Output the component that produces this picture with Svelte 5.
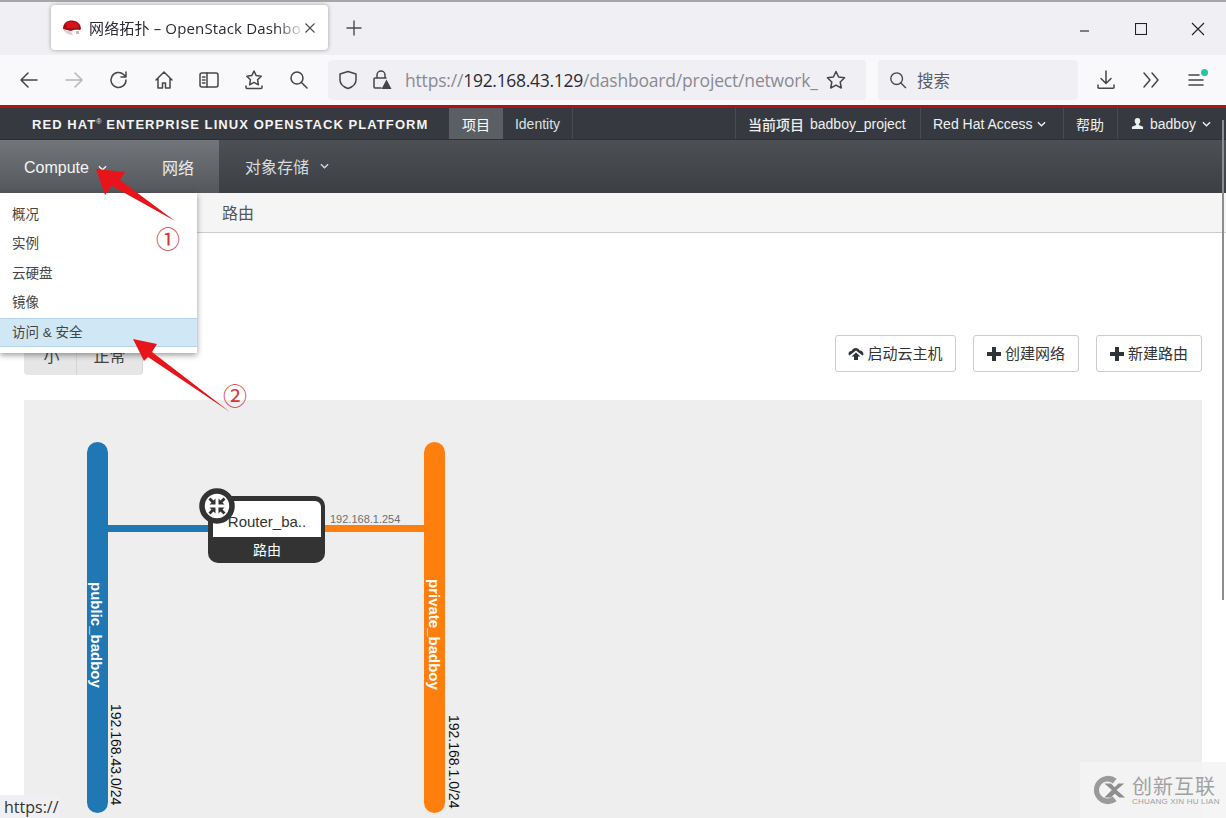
<script>
  const menu = ['概况', '实例', '云硬盘', '镜像'];
</script>

<div class="screen">
  <div class="tabstrip">
    <div class="tab">
      <svg class="favicon" viewBox="0 0 20 16" width="20" height="16"><path d="M1 9 C1 3 5 .5 10 .5 C15 .5 19 4 19 9 L18 10 C14 9.500 11 10 9 11 C6 10 3 10 1 9Z" fill="#a30c12"/><path d="M4 3.500 C7 1 13 1 16 4 L17 8 C12 8 8 8.500 5 8Z" fill="#d5141a"/><path d="M1 9.500 C3 10.500 6 10.500 9 11.500 L11 15 C7 15 3 13 1 9.500Z" fill="#ddcfcf"/><path d="M14 11 h3 v3 h-3z" fill="#c9b8b8"/></svg>
      <span class="tabtitle">网络拓扑 – OpenStack Dashbo</span>
      <svg class="tabclose" viewBox="0 0 12 12" width="12" height="12"><path d="M1.500 1.500l9 9M10.500 1.500l-9 9" stroke="#4a4a4f" stroke-width="1.100" fill="none"/></svg>
    </div>
    <svg class="newtab" viewBox="0 0 16 16" width="16" height="16"><path d="M8 .5v15M.5 8h15" stroke="#4a4a4f" stroke-width="1.400" fill="none"/></svg>
    <div class="winctl">
      <svg viewBox="0 0 12 12" width="12" height="12"><path d="M1 8h9" stroke="#222" stroke-width="1.100"/></svg>
      <svg viewBox="0 0 12 12" width="12" height="12"><rect x=".5" y=".5" width="11" height="11" fill="none" stroke="#222" stroke-width="1.100"/></svg>
      <svg viewBox="0 0 14 14" width="14" height="14"><path d="M1 1l12 12M13 1L1 13" stroke="#222" stroke-width="1.100" fill="none"/></svg>
    </div>
  </div>

  <div class="toolbar">
    <div class="navicons">
      <svg viewBox="0 0 20 20" width="20" height="20"><path d="M18 10H2M9 3l-7 7 7 7" class="ic"/></svg>
      <svg viewBox="0 0 20 20" width="20" height="20"><path d="M2 10h16M11 3l7 7-7 7" class="ic dim"/></svg>
      <svg viewBox="0 0 20 20" width="20" height="20"><path d="M17 10a7.500 7.500 0 1 1-2.400-5.500L17 7M17 2v5h-5" class="ic"/></svg>
      <svg viewBox="0 0 20 20" width="20" height="20"><path d="M2 10l8-8 8 8M4 8.500V18h4.500v-5h3v5H16V8.500" class="ic"/></svg>
      <svg viewBox="0 0 20 20" width="20" height="20"><rect x="1" y="3" width="18" height="14" rx="2" class="ic"/><path d="M8 3v14M3.500 7H6M3.500 10H6M3.500 13H6" class="ic"/></svg>
      <svg viewBox="0 0 20 20" width="20" height="20"><path d="M10 1l2.200 4.600 5 .7-3.600 3.500.8 5-4.400-2.400-4.400 2.400.8-5L2.800 6.300l5-.7zM2 16v1.500a1 1 0 0 0 1 1h14a1 1 0 0 0 1-1V16" class="ic"/></svg>
      <svg viewBox="0 0 20 20" width="20" height="20"><circle cx="8" cy="8" r="6" class="ic"/><path d="M12.500 12.500L18 18" class="ic"/></svg>
    </div>
    <div class="urlbar">
      <svg viewBox="0 0 20 20" width="20" height="20"><path d="M10 1.500l8 2.500v6c0 4-3.500 7-8 8.500-4.500-1.500-8-4.500-8-8.500V4z" class="ic"/></svg>
      <svg class="lock" viewBox="0 0 20 20" width="20" height="20"><path d="M5 8V5a4 4 0 0 1 8 0v3M9 18H3a1 1 0 0 1-1-1V9a1 1 0 0 1 1-1h11" class="ic"/><path d="M14.500 9.500l5 9.500H9.500z" fill="#45454a"/></svg>
      <span class="url">https://<b>192.168.43.129</b>/dashboard/project/network_</span>
      <svg class="star" viewBox="0 0 20 20" width="20" height="20"><path d="M10 1.500l2.600 5.500 6 .8-4.400 4.200 1.100 6L10 15.100 4.700 18l1.100-6L1.400 7.800l6-.8z" class="ic"/></svg>
    </div>
    <div class="searchbar">
      <svg viewBox="0 0 20 20" width="18" height="18"><circle cx="8.500" cy="8.500" r="6.500" class="ic"/><path d="M13 13l5.500 5.500" class="ic"/></svg>
      <span>搜索</span>
    </div>
    <div class="rightnav">
      <svg viewBox="0 0 20 20" width="20" height="20"><path d="M10 1v12M5 8.500l5 5 5-5M2 15v2.500a.8.8 0 0 0 .8.8h14.400a.8.8 0 0 0 .8-.8V15" class="ic"/></svg>
      <svg viewBox="0 0 20 20" width="20" height="20"><path d="M3 3l6 7-6 7M11 3l6 7-6 7" class="ic"/></svg>
      <span class="hamb">
        <svg viewBox="0 0 20 20" width="20" height="20"><path d="M3 5h10M3 10h14M3 15h14" class="ic"/></svg>
        <i class="dot"></i>
      </span>
    </div>
  </div>

  <div class="page">
    <div class="topbar">
      <span class="brand">RED HAT<sup>®</sup> ENTERPRISE LINUX OPENSTACK PLATFORM</span>
      <div class="ttabs">
        <span class="ttab on">项目</span>
        <span class="ttab">Identity</span>
      </div>
      <div class="tright">
        <span class="titem proj"><b>当前项目</b><span class="pname">badboy_project</span></span>
        <span class="titem access">Red Hat Access <svg class="chev" viewBox="0 0 10 6" width="9" height="6"><path d="M1 1l4 4 4-4"/></svg></span>
        <span class="titem help">帮助</span>
        <span class="titem user">
          <svg viewBox="0 0 14 14" width="13" height="13"><path d="M7 1c2 0 3 1.400 3 3.300 0 1.500-.7 2.700-1.500 3.300v1l4.500 2V13H1v-2.400l4.500-2v-1C4.700 7 4 5.800 4 4.300 4 2.400 5 1 7 1z" fill="#eef0f0"/></svg>
          badboy <svg class="chev" viewBox="0 0 10 6" width="9" height="6"><path d="M1 1l4 4 4-4"/></svg>
        </span>
      </div>
    </div>

    <div class="mainnav">
      <div class="activegroup">
        <span class="compute">Compute <svg class="chev" viewBox="0 0 10 6" width="9" height="6"><path d="M1 1l4 4 4-4"/></svg></span>
        <span class="net">网络</span>
      </div>
      <span class="storage">对象存储 <svg class="chev" viewBox="0 0 10 6" width="9" height="6"><path d="M1 1l4 4 4-4"/></svg></span>
    </div>

    <div class="subnav"><span>路由</span></div>

    <div class="content">
      <div class="actions">
        <div class="sizes"><span class="sz small">小</span><span class="sz">正常</span></div>
        <div class="btns">
          <span class="btn">
            <svg viewBox="0 0 16 14" width="16" height="14"><path d="M8 1a4 4 0 0 1 3.700 2.600A3.500 3.500 0 0 1 15.500 7c0 .7-.5 1.300-1 1.600L8 3.500 1.500 8.600C.9 8.200.5 7.600.5 7a3 3 0 0 1 3-3C4.300 2.200 6 1 8 1z" fill="#2f3439"/><path d="M8 5.500l4.500 4H10V13H6V9.500H3.500z" fill="#2f3439"/></svg>
            <span class="bt">启动云主机</span>
          </span>
          <span class="btn">
            <svg viewBox="0 0 14 14" width="14" height="14"><path d="M5 0h4v5h5v4H9v5H5V9H0V5h5z" fill="#2f3439"/></svg>
            <span class="bt">创建网络</span>
          </span>
          <span class="btn">
            <svg viewBox="0 0 14 14" width="14" height="14"><path d="M5 0h4v5h5v4H9v5H5V9H0V5h5z" fill="#2f3439"/></svg>
            <span class="bt">新建路由</span>
          </span>
        </div>
      </div>

      <div class="canvas">
        <div class="bar blue"><span class="vname">public_badboy</span></div>
        <span class="cidr c1">192.168.43.0/24</span>
        <div class="bar orange"><span class="vname o">private_badboy</span></div>
        <span class="cidr c2">192.168.1.0/24</span>
        <div class="link l1"></div>
        <div class="link l2"></div>
        <span class="portip">192.168.1.254</span>
        <div class="router">
          <div class="rname">Router_ba..</div>
          <div class="rlabel">路由</div>
        </div>
        <svg class="rbadge" viewBox="0 0 36 36" width="36" height="36">
          <circle cx="18" cy="18" r="15" fill="#fff" stroke="#333" stroke-width="5.500"/>
          <g fill="#333" stroke="none">
            <path d="M16.500 16.500v-6l-2 2-3-3-2 2 3 3-2 2z"/>
            <path d="M19.500 16.500v-6l2 2 3-3 2 2-3 3 2 2z"/>
            <path d="M16.500 19.500v6l-2-2-3 3-2-2 3-3-2-2z"/>
            <path d="M19.500 19.500v6l2-2 3 3 2-2-3-3 2-2z"/>
          </g>
        </svg>
      </div>
    </div>

    <div class="menu">
      {#each menu as m}
        <div class="mi">{m}</div>
      {/each}
      <div class="mi hi">访问 &amp; 安全</div>
    </div>

    <div class="scroll"></div>
  </div>

  <svg class="marks" viewBox="0 0 1226 818" width="1226" height="818">
    <polygon points="175,221 120,180 125,172 96,169 105,195 112,186" fill="#e8141c"/>
    <polygon points="230,412 152,352 157,344 133,339 144,361 148,357" fill="#e8141c"/>
  </svg>
  <span class="num n1">①</span>
  <span class="num n2">②</span>

  <div class="status">https://</div>
  <div class="wm">
    <svg viewBox="0 0 36 36" width="36" height="34"><path d="M25 6a15 15 0 1 0 0 24l-4-5a9 9 0 1 1 0-14z" fill="#9a9a9a"/><path d="M12 11l8 7-8 8h7l4-4 5 4h6l-9-8 8-7h-6l-4 4-4-4z" fill="#8e8e8e"/></svg>
    <div class="wmt"><div class="wm1">创新互联</div><div class="wm2">CHUANG XIN HU LIAN</div></div>
  </div>
</div>

<style>
  :global(body) { margin: 0; overflow: hidden; background: #fff; }
  .screen { position: relative; width: 1226px; height: 818px; overflow: hidden; font-family: "Liberation Sans", "Noto Sans CJK SC", sans-serif; }
  svg { flex: none; display: block; }
  .ic { fill: none; stroke: #45454a; stroke-width: 1.500; stroke-linecap: round; stroke-linejoin: round; }
  .ic.dim { stroke: #b4b4b8; }

  .tabstrip { height: 55px; box-sizing: border-box; background: #f0f0f4; border-top: 2px solid #a6a6a8; display: flex; align-items: flex-start; padding: 3px 0 0 51px; position: relative; }
  .tab { width: 277px; height: 45px; box-sizing: border-box; background: #fff; border-radius: 4px; box-shadow: 0 0 4px rgba(0,0,0,.35); display: flex; align-items: center; padding: 0 14px 0 11px; font-family: "Open Sans", "Noto Sans CJK SC", sans-serif; font-size: 15px; letter-spacing: .15px; color: #2b2a33; }
  .favicon { margin-right: 7px; }
  .tabtitle { flex: 1; white-space: nowrap; -webkit-mask-image: linear-gradient(90deg, #000 88%, rgba(0,0,0,.15) 100%); mask-image: linear-gradient(90deg, #000 88%, rgba(0,0,0,.15) 100%); }
  .tabclose { margin-left: 3px; }
  .newtab { margin: 15px 0 0 18px; }
  .winctl { margin-left: auto; display: flex; align-items: center; gap: 44px; padding: 17px 21px 0 0; }

  .toolbar { height: 50px; background: #f9f9fb; display: flex; align-items: center; }
  .navicons { display: flex; gap: 25px; padding-left: 19px; width: 328px; box-sizing: border-box; }
  .urlbar { width: 538px; height: 40px; box-sizing: border-box; background: #f0f0f4; border-radius: 4px; display: flex; align-items: center; padding: 0 10px; }
  .lock { margin-left: 14px; }
  .url { margin-left: 13px; width: 418px; overflow: hidden; white-space: nowrap; font-family: "Open Sans", sans-serif; font-size: 17.500px; letter-spacing: -.18px; color: #8a8a90; }
  .url b { font-weight: 400; color: #2b2a33; letter-spacing: -.3px; }
  .star { margin-left: 3px; }
  .searchbar { width: 200px; height: 40px; margin-left: 12px; box-sizing: border-box; background: #f0f0f4; border-radius: 4px; display: flex; align-items: center; gap: 10px; padding-left: 11px; font-family: "Noto Sans CJK SC", sans-serif; font-size: 16.500px; color: #5b5b66; }
  .rightnav { display: flex; gap: 25px; margin-left: 18px; align-items: center; }
  .hamb { position: relative; display: block; }
  .dot { position: absolute; right: -2px; top: -1px; width: 7px; height: 7px; border-radius: 50%; background: #2ac3a2; }

  .page { position: relative; height: 713px; border-top: 3px solid #b20f17; box-sizing: border-box; }
  .topbar { height: 32px; background: #363a40; border-bottom: 1px solid #2d3035; box-sizing: border-box; display: flex; align-items: stretch; color: #eef0f0; font-size: 14px; }
  .brand { width: 449px; box-sizing: border-box; padding-left: 32px; line-height: 33px; font-weight: 700; font-size: 13px; letter-spacing: 1.070px; white-space: nowrap; font-family: "Liberation Sans", sans-serif; color: #f4f4f4; }
  .brand sup { font-size: 7px; font-weight: 400; line-height: 0; vertical-align: 5px; letter-spacing: 0; }
  .ttabs { display: flex; }
  .ttab { display: flex; align-items: center; justify-content: center; width: 70px; border-right: 1px solid #484c51; box-sizing: border-box; color: #dfe1e2; }
  .ttab.on { width: 54px; background: #5b5f63; color: #fff; border-right: none; }
  .tright { margin-left: auto; display: flex; }
  .titem { display: flex; align-items: center; white-space: nowrap; border-left: 1px solid #484c51; box-sizing: border-box; padding-left: 13px; }
  .titem b { font-weight: 500; }
  .pname { margin-left: 6px; }
  .proj { width: 185px; padding-left: 12px; }
  .access { width: 143px; padding-left: 12px; gap: 4px; }
  .help { width: 54px; padding-left: 12px; }
  .user { width: 109px; gap: 6px; }
  .chev { fill: none; stroke: currentColor; stroke-width: 1.500; }

  .mainnav { height: 53px; background: linear-gradient(#4c5054, #3c4044); display: flex; align-items: stretch; font-size: 16px; color: #e4e6e7; }
  .activegroup { width: 219px; background: linear-gradient(#72767a, #54585c); display: flex; align-items: center; padding-left: 24px; box-sizing: border-box; color: #f4f5f5; }
  .compute { display: flex; align-items: center; gap: 9px; width: 138px; padding-top: 3px; }
  .net { color: #eceded; }
  .storage { display: flex; align-items: center; gap: 11px; padding-left: 26px; color: #d8dadb; padding-bottom: 1px; }

  .subnav { height: 40px; background: #f5f5f5; border-bottom: 1px solid #ccc; box-sizing: border-box; padding-left: 222px; line-height: 41px; font-size: 16px; color: #555; }

  .content { padding: 0 24px; }
  .actions { height: 167px; position: relative; display: flex; align-items: flex-end; justify-content: space-between; }
  .sizes { display: flex; height: 38px; margin-bottom: 25px; }
  .sz { background: #e6e6e6; color: #444; font-size: 16px; display: flex; align-items: center; justify-content: center; width: 66px; box-sizing: border-box; border-right: 1px solid #d5d5d5; border-radius: 0 4px 4px 0; padding-bottom: 3px; }
  .sz.small { width: 53px; border-radius: 4px 0 0 4px; padding-left: 3px; }
  .btns { display: flex; gap: 17px; margin-bottom: 28px; }
  .btn { display: flex; align-items: center; gap: 4px; justify-content: center; height: 37px; box-sizing: border-box; width: 106px; border: 1px solid #ccc; border-radius: 3px; background: #fff; color: #333; font-size: 15px; }
  .btn:first-child { width: 121px; gap: 3px; }
  .bt { position: relative; top: -1px; }

  .canvas { position: relative; height: 418px; background: #eee; width: 1178px; overflow: hidden; }
  .bar { position: absolute; top: 42px; width: 21px; height: 371px; border-radius: 11px; }
  .blue { left: 63px; background: #1f77b4; }
  .orange { left: 400px; background: #ff7f0e; }
  .vname { position: absolute; left: 2px; top: 140px; writing-mode: vertical-rl; color: #fff; font-weight: 700; font-size: 15px; line-height: 15px; }
  .vname.o { top: 137px; left: 3px; }
  .cidr { position: absolute; writing-mode: vertical-rl; font-size: 14px; line-height: 15px; color: #111; }
  .c1 { left: 84px; top: 304px; }
  .c2 { left: 422px; top: 315px; }
  .link { position: absolute; top: 125px; height: 7px; }
  .l1 { left: 84px; width: 104px; background: #1f77b4; }
  .l2 { left: 300px; width: 102px; background: #ff7f0e; }
  .portip { position: absolute; left: 306px; top: 113px; font-size: 11px; color: #6f6f6f; }
  .router { position: absolute; left: 184px; top: 96px; width: 117px; height: 67px; box-sizing: border-box; background: #333; border-radius: 10px; padding: 5px 4px 0 5px; display: flex; flex-direction: column; }
  .rname { background: #fff; height: 37px; border-radius: 6px 6px 0 0; box-sizing: border-box; padding-top: 12px; text-align: center; font-size: 15px; line-height: 17px; color: #333; }
  .rlabel { flex: 1; color: #fff; text-align: center; font-size: 14px; line-height: 26px; }
  .rbadge { position: absolute; left: 175px; top: 88px; }

  .menu { position: absolute; left: 0; top: 85px; width: 197px; height: 160px; box-sizing: border-box; background: #fff; box-shadow: 0 2px 6px rgba(0,0,0,.4); padding-top: 8px; font-size: 13.500px; color: #444; }
  .mi { height: 29.250px; line-height: 28px; padding-left: 12px; box-sizing: border-box; }
  .mi.hi { background: #d0e7f6; border-top: 1px solid #b4d3e6; border-bottom: 1px solid #b4d3e6; height: 29px; }

  .scroll { position: absolute; right: 2px; top: 12px; width: 2px; height: 480px; background: #8d8d8d; }

  .marks { position: absolute; left: 0; top: 0; pointer-events: none; }
  .num { position: absolute; color: #d4343a; font-size: 24px; line-height: 28px; font-family: "Noto Sans CJK SC", sans-serif; }
  .n1 { left: 156px; top: 224px; }
  .n2 { left: 223px; top: 381px; }

  .status { position: absolute; left: 0; bottom: 0; width: 59px; height: 23px; box-sizing: border-box; background: #f0f0f4; border-radius: 0 3px 0 0; padding-left: 4px; font-size: 16px; line-height: 24px; color: #333; font-family: "Open Sans", sans-serif; }
  .wm { position: absolute; right: 0; bottom: 0; width: 146px; height: 56px; background: rgba(243,243,243,.85); display: flex; align-items: center; gap: 4px; padding-left: 12px; box-sizing: border-box; color: #a0a0a0; }
  .wm1 { font-size: 20px; line-height: 22px; letter-spacing: 1px; font-family: "Noto Sans CJK SC", sans-serif; }
  .wm2 { font-size: 8px; line-height: 9px; letter-spacing: .2px; white-space: nowrap; }
</style>
